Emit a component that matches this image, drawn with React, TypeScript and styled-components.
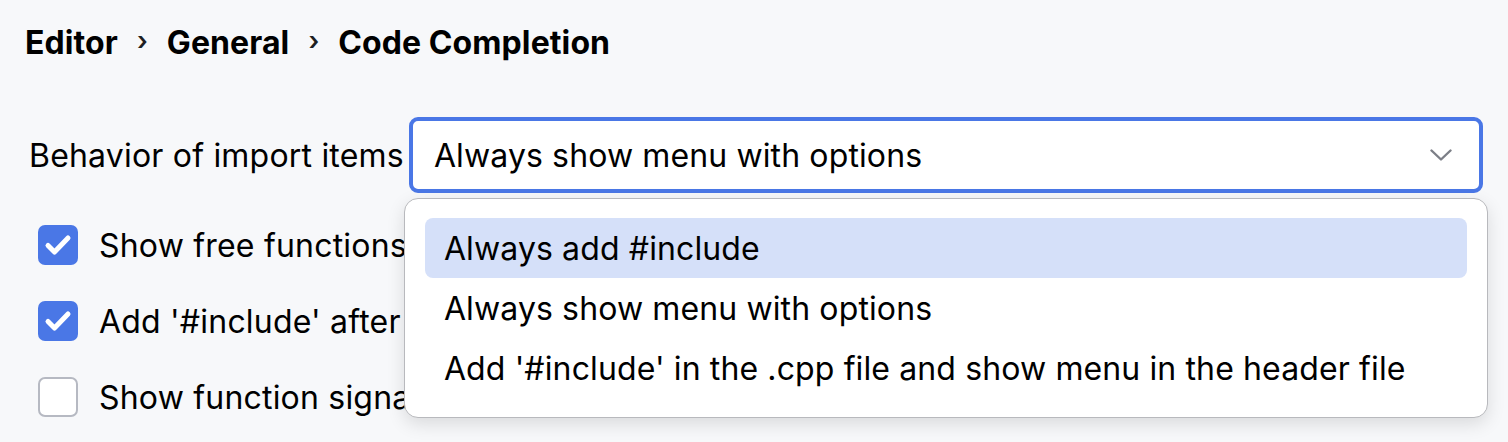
import { createGlobalStyle, styled } from 'styled-components'

const GlobalStyle = createGlobalStyle`
  html, body {
    margin: 0;
    padding: 0;
    background: #f7f8fa;
    font-family: Inter, "Noto Sans", sans-serif;
    color: #000;
  }
`

const options = [
  'Always add #include',
  'Always show menu with options',
  "Add '#include' in the .cpp file and show menu in the header file",
]

const checks = [
  { label: 'Show free functions from other files', checked: true },
  { label: "Add '#include' after completion", checked: true },
  { label: 'Show function signatures', checked: false },
]

const Chevron = () => (
  <svg width="22" height="12" viewBox="0 0 22 12" fill="none">
    <path d="M1.5 1.5L11 10.5L20.5 1.5" stroke="#7c7f87" strokeWidth="2.4" strokeLinecap="round" strokeLinejoin="round" />
  </svg>
)

const Tick = () => (
  <svg width="40" height="40" viewBox="0 0 40 40" fill="none">
    <path d="M10 20.5L16.5 27L30 13" stroke="#fff" strokeWidth="5" strokeLinecap="round" strokeLinejoin="round" />
  </svg>
)

const App = () => {
  return (
    <Page>
      <GlobalStyle />
      <Breadcrumbs>
        <Crumb>Editor</Crumb>
        <Sep>›</Sep>
        <Crumb>General</Crumb>
        <Sep>›</Sep>
        <Crumb>Code Completion</Crumb>
      </Breadcrumbs>
      <ComboRow>
        <Label>Behavior of import items</Label>
        <ComboWrap>
          <Combo>
            <span>Always show menu with options</span>
            <Chevron />
          </Combo>
          <Popup>
            {options.map((o, i) => (
              <Item key={o} $selected={i === 0}>
                {o}
              </Item>
            ))}
          </Popup>
        </ComboWrap>
      </ComboRow>
      <Checks>
        {checks.map((c) => (
          <CheckRow key={c.label}>
            <Box $checked={c.checked}>{c.checked && <Tick />}</Box>
            <Label>{c.label}</Label>
          </CheckRow>
        ))}
      </Checks>
    </Page>
  )
}
export default App

const Page = styled.div`
  width: 1508px;
  height: 442px;
  overflow: hidden;
  padding: 24px 0 0 25px;
  box-sizing: border-box;
`

const Breadcrumbs = styled.div`
  display: flex;
  align-items: center;
  gap: 19px;
  height: 36px;
`

const Crumb = styled.span`
  font-size: 32px;
  font-weight: 700;
  letter-spacing: 0.1px;
`

const Sep = styled.span`
  font-size: 26px;
  font-weight: 600;
  color: #1e1f22;
  margin-top: -4px;
`

const ComboRow = styled.div`
  display: flex;
  align-items: center;
  gap: 5px;
  margin-top: 57px;
  padding-left: 4px;
`

const Label = styled.span`
  font-size: 32px;
  letter-spacing: 0.2px;
  white-space: nowrap;
  color: #000;
`

const ComboWrap = styled.div`
  position: relative;
`

const Combo = styled.div`
  width: 1074px;
  height: 76px;
  box-sizing: border-box;
  border: 4px solid #4a77e6;
  border-radius: 9px;
  background: #fff;
  display: flex;
  align-items: center;
  justify-content: space-between;
  padding: 0 27px 0 21px;
  font-size: 32px;
  letter-spacing: 0.12px;
`

const Popup = styled.div`
  position: absolute;
  left: -5px;
  top: 81px;
  width: 1084px;
  height: 220px;
  box-sizing: border-box;
  background: #fff;
  border: 1.5px solid #b8b9bd;
  border-radius: 14px;
  box-shadow: 0 6px 18px rgba(0, 0, 0, 0.12);
  padding: 19px 20px;
  display: flex;
  flex-direction: column;
  z-index: 2;
`

const Item = styled.div<{ $selected?: boolean }>`
  height: 60px;
  flex: none;
  display: flex;
  align-items: center;
  padding-left: 19px;
  border-radius: 8px;
  font-size: 32px;
  letter-spacing: 0.12px;
  background: ${(p) => (p.$selected ? '#d5e0f9' : 'transparent')};
`

const Checks = styled.div`
  display: flex;
  flex-direction: column;
  gap: 36px;
  margin-top: 32px;
  padding-left: 13px;
`

const CheckRow = styled.div`
  display: flex;
  align-items: center;
  gap: 21px;
`

const Box = styled.div<{ $checked?: boolean }>`
  width: 40px;
  height: 40px;
  box-sizing: border-box;
  border-radius: 7px;
  display: flex;
  align-items: center;
  justify-content: center;
  background: ${(p) => (p.$checked ? '#4a77e6' : '#fff')};
  border: ${(p) => (p.$checked ? 'none' : '2.5px solid #b6b9c2')};
`
